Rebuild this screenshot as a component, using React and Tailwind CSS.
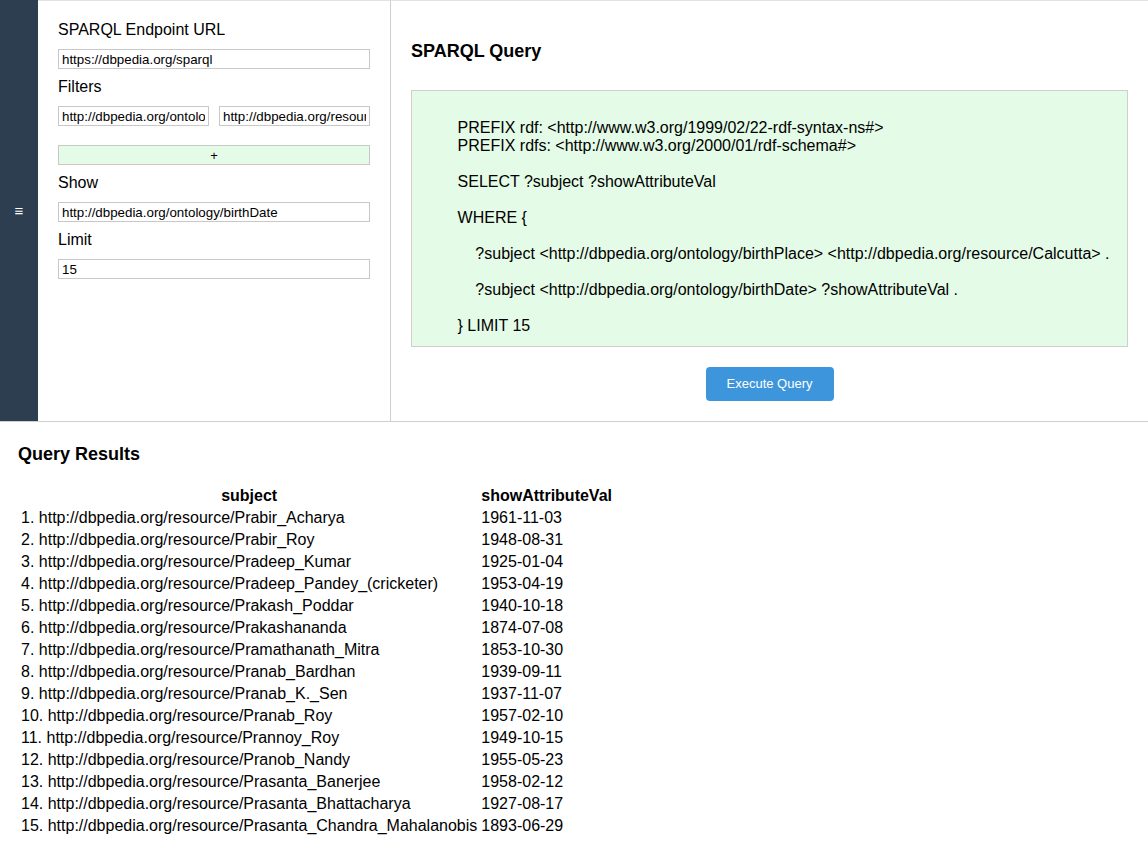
import React from "react";

const query = `
        PREFIX rdf: <http://www.w3.org/1999/02/22-rdf-syntax-ns#>
        PREFIX rdfs: <http://www.w3.org/2000/01/rdf-schema#>

        SELECT ?subject ?showAttributeVal

        WHERE {

            ?subject <http://dbpedia.org/ontology/birthPlace> <http://dbpedia.org/resource/Calcutta> .

            ?subject <http://dbpedia.org/ontology/birthDate> ?showAttributeVal .

        } LIMIT 15`;

const rows = [
  ["Prabir_Acharya", "1961-11-03"],
  ["Prabir_Roy", "1948-08-31"],
  ["Pradeep_Kumar", "1925-01-04"],
  ["Pradeep_Pandey_(cricketer)", "1953-04-19"],
  ["Prakash_Poddar", "1940-10-18"],
  ["Prakashananda", "1874-07-08"],
  ["Pramathanath_Mitra", "1853-10-30"],
  ["Pranab_Bardhan", "1939-09-11"],
  ["Pranab_K._Sen", "1937-11-07"],
  ["Pranab_Roy", "1957-02-10"],
  ["Prannoy_Roy", "1949-10-15"],
  ["Pranob_Nandy", "1955-05-23"],
  ["Prasanta_Banerjee", "1958-02-12"],
  ["Prasanta_Bhattacharya", "1927-08-17"],
  ["Prasanta_Chandra_Mahalanobis", "1893-06-29"],
];

const inputCls =
  "block w-full h-[20px] border border-[#c8c8c8] bg-white px-[3px] text-[13.33px] leading-[15px] text-black outline-none font-['Liberation_Sans',Arial,sans-serif]";

function Label({ children }) {
  return <div className="text-[16px] leading-[20px] mb-[9px]">{children}</div>;
}

export default function App() {
  return (
    <div className="font-['Liberation_Sans',Arial,sans-serif] text-black bg-white min-h-[867px]">
      <div className="flex border-b border-[#cfcfcf]">
        <div className="w-[38px] shrink-0 bg-[#2c3e50] flex items-center justify-center text-white text-[15px] leading-none">
          ≡
        </div>
        <div className="w-[353px] shrink-0 border-r border-[#cfcfcf] border-t border-t-[#e2e2e2] px-5 pt-[19px]">
          <Label>SPARQL Endpoint URL</Label>
          <input className={inputCls} defaultValue="https://dbpedia.org/sparql" />
          <div className="h-[8px]" />
          <Label>Filters</Label>
          <div className="flex gap-[10px]">
            <input className={inputCls + " min-w-0 flex-1"} defaultValue="http://dbpedia.org/ontology/birthPlace" />
            <input className={inputCls + " min-w-0 flex-1"} defaultValue="http://dbpedia.org/resource/Calcutta" />
          </div>
          <button className="mt-[19px] block w-full h-[20px] border border-[#c8c8c8] bg-[#e4fbe7] text-[13px] leading-[15px] text-black">
            +
          </button>
          <div className="h-[8px]" />
          <Label>Show</Label>
          <input className={inputCls} defaultValue="http://dbpedia.org/ontology/birthDate" />
          <div className="h-[8px]" />
          <Label>Limit</Label>
          <input className={inputCls} defaultValue="15" />
        </div>
        <div className="flex-1 border-t border-t-[#e2e2e2] px-5 pb-[20px]">
          <h2 className="mt-[39px] mb-[28px] text-[18px] leading-[22px] font-bold">SPARQL Query</h2>
          <pre className="border border-[#cfcfcf] bg-[#e4fbe7] pt-[10px] px-[10px] pb-[11px] whitespace-pre-wrap text-[16px] leading-[18px] font-['Liberation_Sans',Arial,sans-serif]">
            {query}
          </pre>
          <div className="flex justify-center mt-[20px]">
            <button className="w-[128px] h-[34px] rounded-[4px] bg-[#3d95dc] text-white text-[13px]">
              Execute Query
            </button>
          </div>
        </div>
      </div>
      <div className="px-[18px] pt-[22px] pb-[20px]">
        <h2 className="text-[18px] leading-[21px] font-bold">Query Results</h2>
        <table className="mt-[19px] border-separate border-spacing-[2px] text-[16px] leading-[18px]">
          <thead>
            <tr>
              <th className="p-[1px] font-bold text-center">subject</th>
              <th className="p-[1px] font-bold text-center">showAttributeVal</th>
            </tr>
          </thead>
          <tbody>
            {rows.map(([s, d], i) => (
              <tr key={i}>
                <td className="p-[1px]">{`${i + 1}. http://dbpedia.org/resource/${s}`}</td>
                <td className="p-[1px]">{d}</td>
              </tr>
            ))}
          </tbody>
        </table>
      </div>
    </div>
  );
}
